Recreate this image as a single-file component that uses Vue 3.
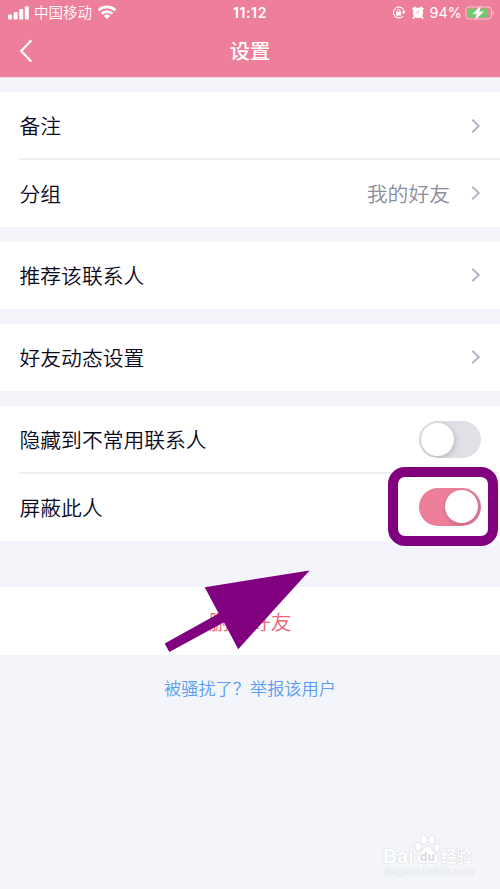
<script setup>
import { ref } from 'vue'

const groups = ref([
  [
    { label: '备注', type: 'link' },
    { label: '分组', type: 'link', value: '我的好友' },
  ],
  [{ label: '推荐该联系人', type: 'link' }],
  [{ label: '好友动态设置', type: 'link' }],
  [
    { label: '隐藏到不常用联系人', type: 'switch', on: false },
    { label: '屏蔽此人', type: 'switch', on: true, marked: true },
  ],
])
</script>

<template>
  <div class="screen">
    <header class="header">
      <div class="status">
        <div class="carrier">
          <svg class="signal" width="22" height="14" viewBox="0 0 22 14" fill="#fff">
            <rect x="0" y="8.5" width="4" height="5" rx="1" />
            <rect x="5.6" y="6" width="4" height="7.5" rx="1" />
            <rect x="11.2" y="3" width="4" height="10.5" rx="1" />
            <rect x="16.8" y="0.2" width="4" height="13.3" rx="1" />
          </svg>
          <span class="operator">中国移动</span>
          <svg class="wifi" width="20" height="14" viewBox="0 0 20 14">
            <g fill="none" stroke="#fff" stroke-width="2.7">
              <path d="M1.6 5.2a12.2 12.2 0 0 1 16.8 0" />
              <path d="M4.6 8.7a7.8 7.8 0 0 1 10.8 0" />
            </g>
            <path d="M6.9 10.9a4.6 4.6 0 0 1 6.2 0L10 14z" fill="#fff" />
          </svg>
        </div>
        <span class="clock">11:12</span>
        <div class="power">
          <svg class="lock" width="14" height="13" viewBox="0 0 14 13">
            <path d="M11.2 3.2A5.4 5.4 0 1 0 11 10" fill="none" stroke="#fff" stroke-width="1.1" />
            <path d="M9.5 5.6h4l-2 2.7z" fill="#fff" />
            <path d="M11.2 3.2a5.2 5.2 0 0 1 .9 3" fill="none" stroke="#fff" stroke-width="1.1" />
            <rect x="4" y="5.7" width="5" height="3.7" rx=".5" fill="#fff" />
            <path d="M5 6V4.8a1.5 1.5 0 0 1 3 0V6" fill="none" stroke="#fff" stroke-width=".9" />
          </svg>
          <svg class="alarm" width="12" height="13" viewBox="0 0 12 13">
            <circle cx="6" cy="6.7" r="5.2" fill="#fff" />
            <path d="M1.2 3 3 1.6M10.8 3 9 1.6M2.6 10.6l-1 1.4M9.4 10.6l1 1.4" stroke="#fff" stroke-width="2" stroke-linecap="round" />
            <path d="M6.2 4.2v2.7H4.2" fill="none" stroke="#f4a9bb" stroke-width=".9" />
          </svg>
          <span class="percent">94%</span>
          <svg class="battery" width="30" height="16" viewBox="0 0 30 16">
            <rect x=".8" y="2" width="25.5" height="12" rx="3.4" fill="none" stroke="#f8c3d0" stroke-width="1.1" />
            <rect x="2.5" y="3.7" width="20.5" height="8.7" rx="1.7" fill="#67cf68" />
            <path d="M27.7 6v4.2c1.8-.6 1.8-3.6 0-4.2z" fill="#f8c3d0" />
            <path d="M15.8.8 7.3 9h4.4L10 15.2l9-8.6h-4.6z" fill="#fff" stroke="#f4a9bb" stroke-width=".4" />
          </svg>
        </div>
      </div>
      <div class="nav">
        <svg class="back" width="14" height="24" viewBox="0 0 14 24">
          <path d="M11.7 2 2.2 12l9.5 10" fill="none" stroke="#fff" stroke-width="2.2" stroke-linecap="round" stroke-linejoin="round" />
        </svg>
        <h1>设置</h1>
      </div>
    </header>

    <main>
      <section v-for="(group, i) in groups" :key="i" class="group">
        <div v-for="row in group" :key="row.label" class="row">
          <span class="label">{{ row.label }}</span>
          <span v-if="row.value" class="value">{{ row.value }}</span>
          <svg v-if="row.type === 'link'" class="chevron" width="10" height="16" viewBox="0 0 10 16">
            <path d="m1.8 2.2 6 5.8-6 5.8" fill="none" stroke="#b4b6c3" stroke-width="2" stroke-linecap="round" stroke-linejoin="round" />
          </svg>
          <button v-else class="switch" :class="{ on: row.on }" @click="row.on = !row.on">
            <span class="knob"></span>
          </button>
          <span v-if="row.marked" class="marker"></span>
        </div>
      </section>
      <section class="remove">
        <span>删除好友</span>
        <svg class="arrow" width="146" height="84" viewBox="0 0 146 84">
          <path d="M145.6.4 40.7 17.2 54.7 43.6.7 73.4 5.3 82 60 52.3 74.2 79.2z" fill="#800080" />
        </svg>
      </section>
      <a class="report">被骚扰了？举报该用户</a>
    </main>

    <div class="watermark">
      <div class="brand">
        <span class="latin">Bai</span>
        <svg class="paw" width="27" height="31" viewBox="0 0 27 31">
          <g fill="#fff" stroke="#dedfe3" stroke-width=".8">
            <ellipse cx="4" cy="12.5" rx="3.2" ry="4.3" transform="rotate(-12 4 12.5)" />
            <ellipse cx="10" cy="5.5" rx="3.2" ry="4.6" />
            <ellipse cx="17.8" cy="6" rx="3.2" ry="4.6" transform="rotate(9 17.8 6)" />
            <ellipse cx="23" cy="13.5" rx="3.1" ry="4.2" transform="rotate(12 23 13.5)" />
            <path d="M13.5 12.5c4 0 5 4.2 8.5 7.5 5 5 1.8 9.8-3.5 9.2-3-.5-6-.5-9 0-6 .8-9.5-4.2-4.5-9.2 3.5-3 4.5-7.5 8.5-7.5z" />
          </g>
          <text x="13.4" y="27" text-anchor="middle">du</text>
        </svg>
        <span class="cn">经验</span>
      </div>
      <div class="site">jingyan.baidu.com</div>
    </div>
  </div>
</template>

<style>
body {
  margin: 0;
}
</style>

<style scoped>
.screen {
  position: relative;
  box-sizing: border-box;
  width: 500px;
  height: 889px;
  overflow: hidden;
  background: #f4f5fa;
  color: #09091c;
  font-family: "Noto Sans CJK SC", sans-serif;
  font-size: 20.8px;
  font-weight: 350;
}
.header {
  box-sizing: border-box;
  height: 78px;
  background: #ee7f9b;
  color: #fff;
  border-bottom: 1px solid #f5dbe3;
}
.status {
  display: grid;
  grid-template-columns: 1fr auto 1fr;
  align-items: center;
  height: 25px;
}
.carrier,
.power {
  display: flex;
  align-items: center;
}
.carrier {
  padding-left: 8px;
}
.operator {
  margin-left: 4px;
  padding-bottom: 2px;
  font-size: 14.5px;
  font-weight: 350;
  line-height: 23px;
}
.wifi {
  margin-left: 5px;
  margin-top: -2px;
}
.clock {
  font: 600 14px/25px Inter, sans-serif;
  letter-spacing: 0.6px;
}
.power {
  justify-content: flex-end;
  padding-right: 5px;
}
.alarm {
  margin-left: 6px;
}
.percent {
  margin-left: 6px;
  font: 400 14.3px/25px Inter, sans-serif;
  letter-spacing: 0.1px;
}
.battery {
  margin-left: 3px;
}
.nav {
  display: grid;
  grid-template-columns: 1fr auto 1fr;
  align-items: center;
  height: 51px;
}
.back {
  margin-left: 19px;
}
h1 {
  margin: 0;
  padding-bottom: 2px;
  font-size: 20.3px;
  font-weight: 500;
  line-height: 28px;
}
main {
  display: flex;
  flex-direction: column;
  gap: 14.5px;
  padding-top: 14px;
}
.group {
  background: #fff;
}
.row {
  position: relative;
  display: flex;
  align-items: center;
  box-sizing: border-box;
  height: 67.5px;
  padding: 0 19.5px;
}
.row + .row::before {
  content: "";
  position: absolute;
  top: -1.5px;
  left: 19px;
  right: 0;
  height: 2px;
  background: #eeeef0;
}
.label {
  flex: 1;
}
.group:first-child .row:first-child .label {
  padding-bottom: 2px;
}
.value {
  margin-right: 20.5px;
  color: #8b8d9d;
}
.switch {
  display: flex;
  box-sizing: border-box;
  width: 62px;
  height: 37.5px;
  padding: 2.25px;
  border: 0;
  border-radius: 19px;
  background: #e1e0e6;
  overflow: hidden;
}
.knob {
  width: 33px;
  height: 33px;
  border-radius: 50%;
  background: #fff;
  box-shadow: 1px 2px 6px rgba(0, 0, 0, 0.2);
}
.switch.on {
  justify-content: flex-end;
  background: #ee7f9b;
}
.marker {
  position: absolute;
  top: -6px;
  right: 2px;
  box-sizing: border-box;
  width: 110px;
  height: 79px;
  border: 10px solid #800080;
  border-radius: 17px;
  pointer-events: none;
}
.remove {
  position: relative;
  height: 68px;
  margin-top: 31.5px;
  background: #fff;
  color: #ee6579;
  text-align: center;
  line-height: 68px;
}
.arrow {
  position: absolute;
  left: 164px;
  top: -17px;
}
.report {
  margin-top: 6px;
  color: #569cf2;
  font-size: 17.2px;
  line-height: 26px;
  text-align: center;
}
.watermark {
  position: absolute;
  left: 383px;
  top: 835px;
  width: 92px;
  color: #fff;
  text-shadow: 0 0 1px #cbccd2, 0 0 1px #cbccd2;
}
.brand {
  display: flex;
  align-items: flex-end;
  height: 30px;
}
.latin {
  flex: none;
  width: 32px;
  font: 700 19.5px/18px "Liberation Sans", sans-serif;
}
.paw {
  flex: none;
  margin-left: -1px;
}
.paw text {
  fill: #d7d8dc;
  font: 700 12px "Liberation Sans", sans-serif;
  text-shadow: none;
}
.cn {
  flex: none;
  font: 700 15.5px/20px "Noto Sans CJK SC", sans-serif;
}
.site {
  padding-left: 2px;
  font: 400 11.1px/12px "Liberation Sans", sans-serif;
  white-space: nowrap;
}
</style>
